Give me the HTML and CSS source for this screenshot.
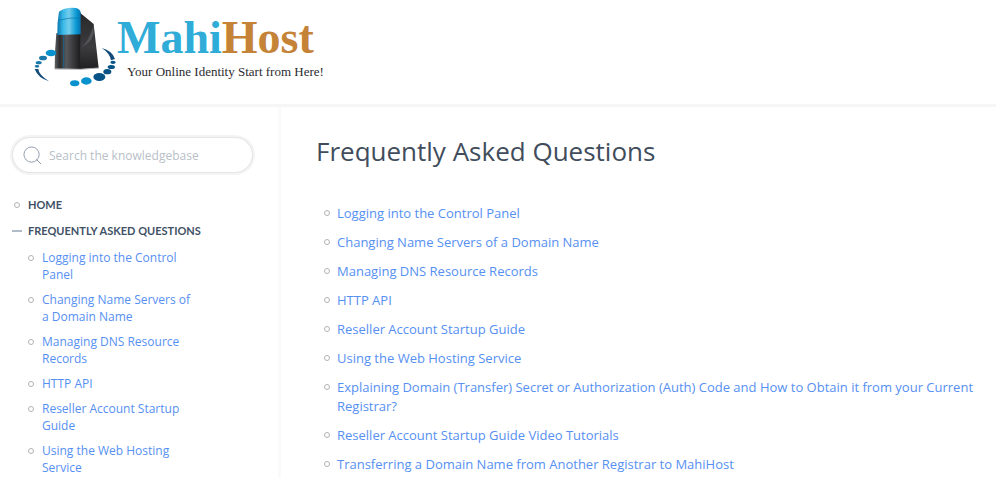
FILE: index.html
```html
<!DOCTYPE html>
<html lang="en">
<head>
    <meta charset="UTF-8">
    <meta name="viewport" content="width=device-width, initial-scale=1.0">
    <title>Frequently Asked Questions - MahiHost</title>
    <link rel="stylesheet" href="styles.css">
</head>
<body>
    <header class="header">
        <a class="logo" href="#">
            <svg class="logo-mark" viewBox="36 12 255 255" aria-hidden="true">
                <defs>
                    <linearGradient id="blue">
                        <stop offset="0" stop-color="#0876ad"/>
                        <stop offset=".25" stop-color="#39b9e8"/>
                        <stop offset=".5" stop-color="#75cdec"/>
                        <stop offset=".8" stop-color="#0c9bd5"/>
                        <stop offset="1" stop-color="#0673b0"/>
                    </linearGradient>
                    <linearGradient id="front">
                        <stop offset="0" stop-color="#606266"/>
                        <stop offset=".2" stop-color="#2b2b2d"/>
                        <stop offset=".45" stop-color="#57585b"/>
                        <stop offset="1" stop-color="#1c1c1e"/>
                    </linearGradient>
                    <linearGradient id="side" x1="0" y1="0" x2="0" y2="1">
                        <stop offset="0" stop-color="#27282a"/>
                        <stop offset=".6" stop-color="#3c3c3e"/>
                        <stop offset="1" stop-color="#202022"/>
                    </linearGradient>
                </defs>
                <path fill="url(#side)" d="M180 38l41 34q5 45 15 132l-57 4z"/>
                <path fill="#515255" d="M184 140q22-15 37-66v28q-8 30-37 38z"/>
                <path fill="url(#front)" d="M109 100h72l-1 107-76-1q0-55 5-106z"/>
                <path fill="url(#blue)" d="M117 35q18-14 50-11 13 2 15 13v66l-70 2q-1-37 5-70z"/>
                <path fill="none" stroke="#0872a5" stroke-width="2" d="M115 61q30-9 67-7M131 106v99"/>
                <path fill="none" stroke="#b1b2b5" stroke-width="3" d="M104 207l76 1 56-4"/>
                <g fill="#0792cd">
                    <ellipse cx="93" cy="159" rx="16" ry="10"/>
                    <ellipse cx="164" cy="250" rx="14" ry="9"/>
                    <ellipse cx="199" cy="243" rx="16" ry="11"/>
                </g>
                <g fill="#1878a9">
                    <ellipse cx="69" cy="174" rx="12" ry="7"/>
                    <ellipse cx="56" cy="188" rx="9" ry="5"/>
                    <ellipse cx="51" cy="199" rx="7" ry="4"/>
                </g>
                <path fill="#124b79" d="M44 207h11q1 17 32 37-33-10-43-37zM245 144q32 8 40 33l-12 4q-4-22-28-37z"/>
                <g fill="#075287">
                    <ellipse cx="238" cy="231" rx="18" ry="12"/>
                    <ellipse cx="262" cy="215" rx="12" ry="8"/>
                    <ellipse cx="274" cy="201" rx="11" ry="6"/>
                    <ellipse cx="279" cy="187" rx="8" ry="5"/>
                </g>
            </svg>
            <span class="logo-text">
                <span class="logo-name">Mahi<span class="logo-host">Host</span></span>
                <span class="logo-tagline">Your Online Identity Start from Here!</span>
            </span>
        </a>
    </header>
    <div class="page">
        <aside class="sidebar">
            <form class="search">
                <svg class="search-icon" viewBox="0 0 20 20" aria-hidden="true">
                    <circle cx="9" cy="9" r="8"/>
                    <path d="M14 14l5 5"/>
                </svg>
                <input type="search" placeholder="Search the knowledgebase" aria-label="Search the knowledgebase">
            </form>
            <nav>
                <ul class="nav">
                    <li class="circle"><a href="#">Home</a></li>
                    <li class="open"><a href="#">Frequently Asked Questions</a>
                        <ul class="subnav">
                            <li class="circle"><a href="#">Logging into the Control Panel</a></li>
                            <li class="circle"><a href="#">Changing Name Servers of a Domain Name</a></li>
                            <li class="circle"><a href="#">Managing DNS Resource Records</a></li>
                            <li class="circle"><a href="#">HTTP API</a></li>
                            <li class="circle"><a href="#">Reseller Account Startup Guide</a></li>
                            <li class="circle"><a href="#">Using the Web Hosting Service</a></li>
                        </ul>
                    </li>
                </ul>
            </nav>
        </aside>
        <main class="content">
            <h1>Frequently Asked Questions</h1>
            <ul class="articles">
                <li class="circle"><a href="#">Logging into the Control Panel</a></li>
                <li class="circle"><a href="#">Changing Name Servers of a Domain Name</a></li>
                <li class="circle"><a href="#">Managing DNS Resource Records</a></li>
                <li class="circle"><a href="#">HTTP API</a></li>
                <li class="circle"><a href="#">Reseller Account Startup Guide</a></li>
                <li class="circle"><a href="#">Using the Web Hosting Service</a></li>
                <li class="circle"><a href="#">Explaining Domain (Transfer) Secret or Authorization (Auth) Code and How to Obtain it from your Current Registrar?</a></li>
                <li class="circle"><a href="#">Reseller Account Startup Guide Video Tutorials</a></li>
                <li class="circle"><a href="#">Transferring a Domain Name from Another Registrar to MahiHost</a></li>
            </ul>
        </main>
    </div>
</body>
</html>
```
FILE: styles.css
```css
*,
*::before {
    box-sizing: border-box;
}
body {
    margin: 0;
    font-family: "Open Sans", sans-serif;
    font-size: 13px;
    line-height: 19px;
    color: #414d5c;
    background: #fff;
    min-height: 100vh;
    display: flex;
    flex-direction: column;
}
a {
    color: #5690f2;
    text-decoration: none;
}
a:hover {
    text-decoration: underline;
}
ul {
    list-style: none;
    margin: 0;
    padding: 0;
}
.header {
    padding: 4px 32px 15px;
    border-bottom: 3px solid #f6f6f6;
}
.logo {
    display: inline-flex;
    vertical-align: top;
}
.logo:hover {
    text-decoration: none;
}
.logo-mark {
    width: 85px;
    height: 85px;
}
.logo-text {
    display: flex;
    flex-direction: column;
    padding-top: 10px;
    font-family: "Liberation Serif", serif;
}
.logo-name {
    font-size: 46px;
    line-height: 48px;
    font-weight: bold;
    color: #2fadd8;
}
.logo-host {
    color: #c58337;
}
.logo-tagline {
    padding-left: 10px;
    font-size: 13px;
    line-height: 20px;
    color: #2b2b30;
}
.page {
    display: flex;
    flex: 1;
}
.sidebar {
    flex: 0 0 281px;
    padding: 31px 26px 0 12px;
    border-right: 3px solid #fafafa;
}
.search {
    display: flex;
    align-items: center;
    gap: 7px;
    height: 34px;
    padding: 0 10px;
    margin: 0 0 24px 1px;
    border-radius: 18px;
    box-shadow: 0 0 0 1px #e6e6e6, 0 0 0 3px #f4f4f4;
}
.search-icon {
    flex: none;
    width: 19px;
    height: 19px;
    fill: none;
    stroke: #8d99a8;
}
.search input {
    flex: 1;
    min-width: 0;
    padding: 0;
    border: 0;
    outline: 0;
    background: none;
    font: 12px/17px "Open Sans", sans-serif;
    color: #414d5c;
}
.search input::placeholder {
    color: #b8c0c8;
}
.nav {
    font-size: 12px;
    line-height: 17px;
}
.nav > li {
    padding-left: 16px;
    margin-bottom: 9px;
}
.nav > li > a {
    font-family: Lato, sans-serif;
    font-size: 11px;
    font-weight: bold;
    text-transform: uppercase;
    color: #3f5165;
}
.subnav {
    padding: 10px 55px 0 0;
}
.subnav li {
    padding-left: 14px;
    margin-bottom: 8px;
}
.circle,
.open {
    position: relative;
}
.circle::before {
    content: "";
    position: absolute;
    left: 0;
    top: 6px;
    width: 6px;
    height: 6px;
    border: 1px solid #b0b3b7;
    border-radius: 50%;
}
.nav > .circle::before {
    left: 2px;
}
.open::before {
    content: "";
    position: absolute;
    left: 0;
    top: 8px;
    width: 10px;
    height: 2px;
    background: #b1bac7;
}
.content {
    flex: 1;
    min-width: 0;
    padding: 26px 20px 0 35px;
}
h1 {
    margin: 0 0 35px;
    font-size: 26px;
    line-height: 36px;
    font-weight: normal;
    color: #414d5c;
}
.articles {
    padding-left: 8px;
}
.articles li {
    padding-left: 13px;
    margin-bottom: 10px;
}
.articles li:last-child,
.nav > li:last-child,
.subnav li:last-child {
    margin-bottom: 0;
}
```
